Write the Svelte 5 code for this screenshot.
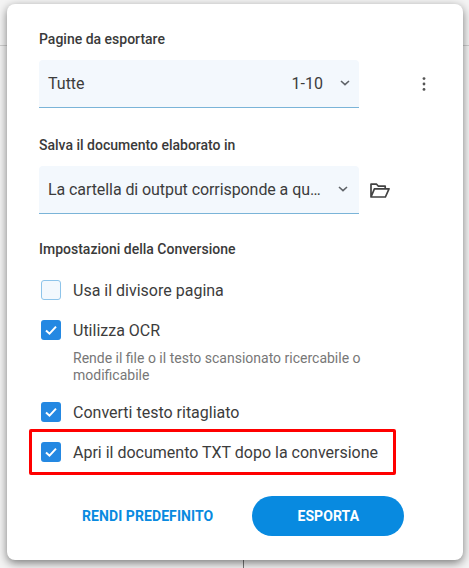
<script lang="ts">
    const options = [
        { label: "Usa il divisore pagina", checked: false },
        {
            label: "Utilizza OCR",
            checked: true,
            hint: "Rende il file o il testo scansionato ricercabile o modificabile",
        },
        { label: "Converti testo ritagliato", checked: true },
        { label: "Apri il documento TXT dopo la conversione", checked: true, marked: true },
    ];
</script>

<div class="page">
    <div class="backdrop"></div>
    <div class="dialog">
        <h3>Pagine da esportare</h3>
        <div class="row">
            <div class="select">
                <span class="value">Tutte</span>
                <span class="range">1-10</span>
                <svg class="chevron" viewBox="0 0 10 6" width="10" height="6"><path d="M1 1l4 3.6L9 1" fill="none" stroke="#5f6368" stroke-width="1.6" /></svg>
            </div>
            <svg class="more" viewBox="0 0 4 14" width="4" height="14"><circle cx="2" cy="1.6" r="1.4" /><circle cx="2" cy="7" r="1.4" /><circle cx="2" cy="12.4" r="1.4" /></svg>
        </div>

        <h3 class="second">Salva il documento elaborato in</h3>
        <div class="row">
            <div class="select">
                <span class="value ellipsis">La cartella di output corrisponde a qu…</span>
                <svg class="chevron shifted" viewBox="0 0 10 6" width="10" height="6"><path d="M1 1l4 3.6L9 1" fill="none" stroke="#5f6368" stroke-width="1.6" /></svg>
            </div>
            <svg class="folder" viewBox="0 0 20 15" width="20" height="15"><path d="M1 14V1.2h5.6l1.8 2h6.8v2.6M1 14h14.4L19 5.8H4.4L1 14z" fill="none" stroke="#424242" stroke-width="1.7" stroke-linejoin="round" /></svg>
        </div>

        <h3 class="third">Impostazioni della Conversione</h3>
        <ul>
            {#each options as opt}
                <li class:marked={opt.marked}>
                    <div class="line">
                        <span class="box" class:on={opt.checked}>
                            {#if opt.checked}
                                <svg viewBox="0 0 20 20" width="20" height="20"><path d="M5 10.4l3.5 3.3L15 6.6" fill="none" stroke="#fff" stroke-width="2" /></svg>
                            {/if}
                        </span>
                        <span>{opt.label}</span>
                    </div>
                    {#if opt.hint}
                        <p>{opt.hint}</p>
                    {/if}
                </li>
            {/each}
        </ul>

        <div class="actions">
            <button class="link">RENDI PREDEFINITO</button>
            <button class="primary">ESPORTA</button>
        </div>
    </div>
</div>

<style>
    :global(body) {
        margin: 0;
    }

    .page {
        width: 469px;
        height: 568px;
        position: relative;
        overflow: hidden;
        background: #f1f1f1;
        font-family: Roboto, "Liberation Sans", sans-serif;
        color: #333;
        box-sizing: border-box;
        padding: 4px 6px 0 7px;
    }

    .backdrop {
        position: absolute;
        left: 0;
        top: 0;
        width: 469px;
        height: 568px;
        background:
            linear-gradient(#cfcfcf, #cfcfcf) 0 45px / 100% 1px no-repeat,
            linear-gradient(#777, #777) 243px 540px / 1px 28px no-repeat,
            #f4f4f4;
    }

    .dialog {
        position: relative;
        height: 556px;
        box-sizing: border-box;
        background: #fff;
        border-radius: 8px;
        box-shadow: 0 3px 10px rgba(0, 0, 0, 0.5);
        padding: 27px 32px 0;
    }

    h3 {
        margin: 0;
        font-size: 14px;
        line-height: 16px;
        font-weight: 500;
        color: #3a3a3a;
    }

    .second {
        margin-top: 29px;
    }

    .third {
        margin-top: 27px;
    }

    .row {
        display: flex;
        align-items: center;
        margin-top: 13px;
    }

    .select {
        width: 320px;
        height: 48px;
        box-sizing: border-box;
        display: flex;
        align-items: center;
        padding: 0 9px 0 9px;
        background: #f3f8fd;
        border-bottom: 1px solid #7ab4d8;
        border-radius: 4px 4px 0 0;
        font-size: 16px;
        color: #3c3c3c;
    }

    .value {
        flex: 1;
        min-width: 0;
    }

    .range {
        margin-right: 17px;
    }

    .ellipsis {
        white-space: nowrap;
        letter-spacing: -0.08px;
    }

    .chevron {
        flex: none;
        margin-bottom: 2px;
    }

    .chevron.shifted {
        margin-right: 2px;
    }

    .more {
        margin-left: 63px;
        fill: #555;
    }

    .folder {
        margin-left: 11px;
    }

    ul {
        list-style: none;
        margin: 0;
        padding: 0;
        margin-top: 23px;
        display: flex;
        flex-direction: column;
        gap: 20px;
    }

    li {
        position: relative;
        padding-left: 2px;
    }

    .line {
        display: flex;
        align-items: center;
        gap: 12px;
        height: 20px;
        font-size: 16px;
        color: #3c3c3c;
    }

    .box {
        width: 20px;
        height: 20px;
        box-sizing: border-box;
        border-radius: 3px;
        background: #f3f8fd;
        border: 1px solid #8ec4ea;
        flex: none;
    }

    .box.on {
        background: #2488e2;
        border: 0;
    }

    .box svg {
        display: block;
    }

    p {
        margin: 10px 0 -2px 32px;
        font-size: 14px;
        line-height: 17px;
        color: #777;
        width: 300px;
    }

    .marked::after {
        content: "";
        position: absolute;
        left: -10px;
        top: -13px;
        width: 367px;
        height: 46px;
        box-sizing: border-box;
        border: 3px solid #f00;
        border-radius: 2px;
    }

    .actions {
        display: flex;
        align-items: center;
        margin-top: 34px;
        padding-left: 43px;
    }

    button {
        border: 0;
        font: inherit;
        font-size: 14px;
        font-weight: 700;
        padding: 0;
        letter-spacing: 0.08px;
    }

    .link {
        background: none;
        color: #088ae0;
    }

    .primary {
        margin-left: 39px;
        width: 152px;
        height: 40px;
        border-radius: 20px;
        background: #088ae0;
        color: #fff;
    }
</style>
